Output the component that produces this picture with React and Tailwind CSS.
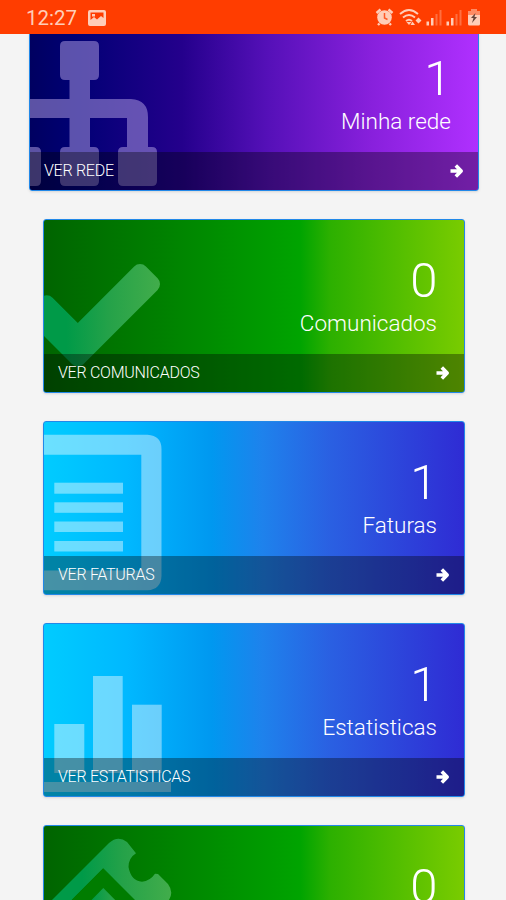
import React from 'react';

const SitemapArt = () => (
  <g fill="#a895dc" fillOpacity="0.55">
    <path d="M35 23H64Q69 23 69 28V57Q69 62 64 62H60V81H101Q118 82 118 99V129H122Q127 129 127 134V163Q127 168 122 168H93Q88 168 88 163V134Q88 129 93 129H97V100H60V129H64Q69 129 69 134V163Q69 168 64 168H35Q30 168 30 163V134Q30 129 35 129H39.5V100H0V81H39.5V62H35Q30 62 30 57V28Q30 23 35 23Z" />
    <path d="M0 129H6Q11 129 11 134V163Q11 168 6 168H0Z" />
  </g>
);

const CheckArt = () => (
  <path
    fill="url(#greenArt)"
    transform="translate(-27.7 15.4) scale(0.086)"
    d="M1671 566q0 40-28 68l-724 724-136 136q-28 28-68 28t-68-28l-136-136-362-362q-28-28-28-68t28-68l136-136q28-28 68-28t68 28l294 295 656-657q28-28 68-28t68 28l136 136q28 28 28 68z"
  />
);

const InvoiceArt = () => (
  <g fill="#fff" fillOpacity="0.42">
    <path d="M0 12.7H103.5Q117.5 13.5 117.5 27V154Q117 167.5 103.5 168.3H0V148.5H97.3V32.7H0Z" />
    <rect x="10.3" y="60.7" width="68.7" height="11" />
    <rect x="10.3" y="80.3" width="68.7" height="10.5" />
    <rect x="10.3" y="99.5" width="68.7" height="10.5" />
    <rect x="10.3" y="119" width="68.7" height="10.5" />
  </g>
);

const ChartArt = () => (
  <g fill="#fff" fillOpacity="0.42">
    <rect x="10.3" y="100" width="30" height="49" />
    <rect x="49" y="52" width="29.7" height="97" />
    <rect x="88" y="80.7" width="29.7" height="68.3" />
    <rect x="0" y="158" width="127" height="10" />
  </g>
);

const ToolsArt = () => (
  <g fill="url(#greenArt)">
    <path d="M0 82L65 17Q74 9 83 16L92 27.3Q84.5 32 84.5 41Q87 55 98 55.7Q106 55 111 47.7L114 48L124 58Q130 66 125 74V120H80L59 42.5L0 102Z" />
    <path fill="#007c00" d="M59.3 42.3L100 83V173H0V101.6Z" />
    <path d="M59.3 62L90 93H29Z" />
  </g>
);

const green = 'bg-[linear-gradient(90deg,#006400_0%,#008000_28%,#00a400_61%,#2cb000_68%,#7acc00_100%)]';
const blue = 'bg-[linear-gradient(90deg,#00ccff_0%,#00b8ff_20%,#0098f0_40%,#1e82ec_52%,#2a60e2_68%,#2f2bd4_100%)]';
const purple = 'bg-[linear-gradient(90deg,#000060_0%,#000074_10%,#24008c_34%,#5510b8_53%,#8820dc_76%,#b030ff_100%)]';

const cards = [
  { id: 'rede', count: 1, label: 'Minha rede', link: 'VER REDE', art: <SitemapArt />, wide: true, bg: purple },
  { id: 'comunicados', count: 0, label: 'Comunicados', link: 'VER COMUNICADOS', art: <CheckArt />, bg: green },
  { id: 'faturas', count: 1, label: 'Faturas', link: 'VER FATURAS', art: <InvoiceArt />, bg: blue },
  { id: 'estatisticas', count: 1, label: 'Estatisticas', link: 'VER ESTATISTICAS', art: <ChartArt />, bg: blue },
  { id: 'ferramentas', count: 0, art: <ToolsArt />, bg: green },
];

const ArrowRight = () => (
  <svg className="w-[14px] h-[14px]" viewBox="0 0 14 14" fill="none" stroke="#fff" strokeWidth="3.6">
    <path d="M0.5 7H11M5.8 1.6L11.2 7L5.8 12.4" strokeLinejoin="round" />
  </svg>
);

const StatCard = ({ card }) => (
  <div
    className={`relative shrink-0 h-[174px] rounded-[3px] border border-[#2288e8] overflow-hidden shadow-sm flex flex-col text-white bg-origin-border ${card.bg} ${card.wide ? 'w-[450px]' : 'w-[422px]'}`}
  >
    {/* Large faded icon */}
    <svg className="absolute left-0 top-0 w-[160px] h-[172px]" viewBox="0 0 160 172">
      {card.art}
    </svg>

    {/* Count and label */}
    <div className="relative flex-1 flex flex-col items-end pr-[27px] pt-[32px] font-light">
      <span className="text-[49px] leading-[58px] tracking-[-0.5px]">{card.count}</span>
      {card.label && <span className="text-[22.5px] leading-[28px] -mt-px">{card.label}</span>}
    </div>

    {/* Footer link */}
    {card.link && (
      <div className="relative h-[38px] bg-black/35 flex items-center justify-between px-[14px]">
        <span className="text-[16px] leading-none font-light tracking-[-0.27px]">{card.link}</span>
        <ArrowRight />
      </div>
    )}
  </div>
);

const StatusBar = () => (
  <header className="relative z-10 h-[34px] bg-[#ff3d00] flex items-center justify-between pl-[26px] pr-[23px] text-[#ffcdb8]">
    <div className="flex items-center gap-[11px] pt-[2px]">
      <span className="text-[20.5px] leading-none">12:27</span>
      <svg width="18" height="16" viewBox="0 0 18 16" fill="currentColor">
        <path fillRule="evenodd" d="M2 0H16Q18 0 18 2V14Q18 16 16 16H2Q0 16 0 14V2Q0 0 2 0ZM2.5 2.5V10L6 7L9 9.5L13 6L15.5 8V2.5ZM4 4H7V6.5H4Z" />
      </svg>
    </div>
    <svg width="108" height="20" viewBox="0 0 108 20" fill="currentColor">
      {/* Alarm */}
      <circle cx="9.5" cy="10.5" r="7.3" />
      <path d="M1.5 6L5.5 2.5M17.5 6L13.5 2.5M4.5 16.5L3 18M14.5 16.5L16 18" stroke="currentColor" strokeWidth="2.4" />
      <path d="M9.5 6V11L12.5 12.5" stroke="#ff5a28" strokeWidth="1.5" fill="none" />
      {/* Wifi */}
      <path d="M25 7Q34 -1 43 7M28 10.5Q34 5.5 40 10.5M31 14Q34 11.5 37 14" stroke="currentColor" strokeWidth="1.9" fill="none" />
      <path d="M34 18L31.5 15H36.5ZM37.5 14.5L40 18H35.5ZM40.5 13.5L43.5 10.5L46.5 13.5L43.5 16.5Z" />
      {/* Signal strength, two SIMs */}
      <rect x="51.5" y="14.5" width="2.5" height="4" />
      <rect x="56" y="11" width="2.5" height="7.5" />
      <rect x="60.5" y="7" width="2" height="11.5" opacity="0.35" />
      <rect x="64.5" y="3" width="2" height="15.5" opacity="0.35" />
      <rect x="71.5" y="14.5" width="2.5" height="4" />
      <rect x="76" y="11" width="2.5" height="7.5" />
      <rect x="80.5" y="7" width="2" height="11.5" opacity="0.35" />
      <rect x="84.5" y="3" width="2" height="15.5" opacity="0.35" />
      {/* Battery */}
      <path d="M93 4H96V2H102V4H105V8H93Z" opacity="0.55" />
      <path d="M93 8H105V17Q105 18.5 103.5 18.5H94.5Q93 18.5 93 17Z" />
      <path d="M100.5 6L96 11H98.5L97 16L102 10H99.5Z" fill="#65443a" />
    </svg>
  </header>
);

const App = () => (
  <div className="h-[900px] w-full overflow-hidden bg-[#f4f4f4] font-[Roboto,sans-serif]">
    <svg className="absolute w-0 h-0">
      <defs>
        <linearGradient id="greenArt" gradientUnits="objectBoundingBox">
          <stop offset="0.3" stopColor="#009a48" />
          <stop offset="0.62" stopColor="#25a249" />
          <stop offset="1" stopColor="#42ad4b" />
        </linearGradient>
      </defs>
    </svg>
    <StatusBar />
    <main className="-mt-[17px] flex flex-col items-center gap-[28px] pl-[2px]">
      {cards.map((card) => (
        <StatCard key={card.id} card={card} />
      ))}
    </main>
  </div>
);

export default App;
